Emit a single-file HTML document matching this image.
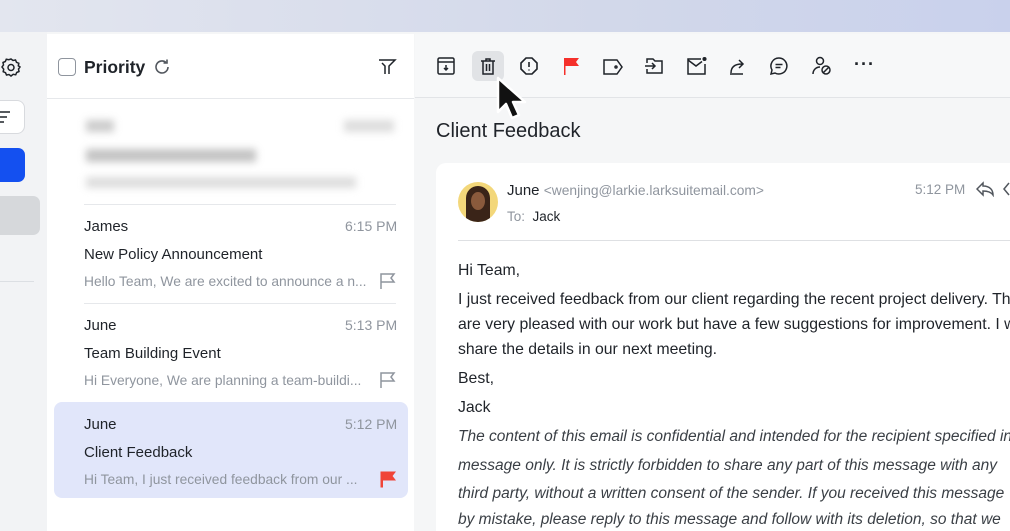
<!DOCTYPE html>
<html><head><meta charset="utf-8"><style>
*{margin:0;padding:0;box-sizing:border-box}
html,body{width:1010px;height:531px;overflow:hidden}
body{position:relative;font-family:"Liberation Sans",Arial,sans-serif;color:#1f2329;background:#f5f6f7}
.a{position:absolute;white-space:nowrap}
.top{left:0;top:0;width:1010px;height:32px;background:linear-gradient(90deg,#e3e6ef,#d2d8ea 60%,#c9d1ec)}
.side{left:0;top:32px;width:47px;height:499px;background:#f2f3f5}
.list{left:47px;top:34px;width:367px;height:497px;background:#fff}
.right{left:415px;top:34px;width:595px;height:497px;background:#f5f6f7}
.tb{left:415px;top:34px;width:595px;height:64px;background:#f7f8f9;border-bottom:1px solid #e2e4e7}
.card{left:436px;top:163px;width:600px;height:368px;background:#fff;border-radius:10px 10px 0 0}
.name{font-size:15px;color:#1f2329}
.time{font-size:14px;color:#8f959e}
.subj{font-size:15px;color:#1f2329}
.prev{font-size:13.8px;color:#8f959e}
.sep{height:1px;background:#e6e8eb}
.body{font-size:15.8px;color:#1f2329;left:458px}
.it{font-style:italic;color:#3a3f45;font-size:15.5px}
svg{position:absolute}
</style></head><body>
<div class="a top"></div>
<div class="a side"></div>
<div class="a list"></div>
<div class="a right"></div>
<div class="a tb"></div>

<svg style="left:1px;top:57px" width="20" height="20" viewBox="0 0 20 20" fill="none" stroke="#1f2329" stroke-width="1.5"><path d="M10 2l2 1.5 2.5-.5 1 2.3 2.3 1-.5 2.5L19 10l-1.5 2 .5 2.5-2.3 1-1 2.3-2.5-.5L10 19l-2-1.5-2.5.5-1-2.3-2.3-1 .5-2.5L1 10l1.5-2L2 5.5l2.3-1 1-2.3 2.5.5z"/><circle cx="10" cy="10.5" r="3"/></svg>
<div class="a" style="left:-10px;top:100px;width:35px;height:34px;border:1px solid #d8dade;border-radius:8px;background:#fff"></div>
<svg style="left:0;top:110px" width="12" height="14" stroke="#1f2329" stroke-width="1.5"><path d="M0 2h10M0 7h7M0 12h4"/></svg>
<div class="a" style="left:-10px;top:148px;width:35px;height:34px;background:#1450f0;border-radius:7px"></div>
<div class="a" style="left:-10px;top:196px;width:50px;height:39px;background:#d6d8db;border-radius:7px"></div>
<div class="a" style="left:0;top:281px;width:34px;height:1px;background:#dcdfe3"></div>

<div class="a" style="left:58px;top:58px;width:18px;height:18px;border:1.5px solid #8f959e;border-radius:4px"></div>
<div class="a" style="left:84px;top:57px;font-size:17.5px;font-weight:600;color:#1f2329">Priority</div>
<svg style="left:152px;top:57px" width="20" height="20" viewBox="0 0 20 20" fill="none" stroke="#51565d" stroke-width="1.6"><path d="M16 10a6 6 0 1 1-2-4.5"/><path d="M15 2.5V6h-3.5"/></svg>
<svg style="left:377px;top:57px" width="20" height="20" viewBox="0 0 20 20" fill="none" stroke="#1f2329" stroke-width="1.5"><path d="M2 3h16l-6 6v8M8 17V9L5 6"/></svg>
<div class="a sep" style="left:47px;top:98px;width:367px"></div>

<div class="a" style="left:84px;top:112px;width:312px;height:80px;filter:blur(4px);opacity:.5">
<div class="a" style="left:2px;top:8px;width:28px;height:12px;background:#999"></div>
<div class="a" style="left:260px;top:8px;width:50px;height:12px;background:#bbb"></div>
<div class="a" style="left:2px;top:37px;width:170px;height:13px;background:#888"></div>
<div class="a" style="left:2px;top:65px;width:270px;height:11px;background:#bbb"></div>
</div>
<div class="a sep" style="left:84px;top:204px;width:312px"></div>

<div class="a name" style="left:84px;top:218px">James</div>
<div class="a time" style="left:345px;top:218px">6:15 PM</div>
<div class="a subj" style="left:84px;top:246px">New Policy Announcement</div>
<div class="a prev" style="left:84px;top:274px">Hello Team, We are excited to announce a n...</div>
<svg style="left:379px;top:272px" width="18" height="18" fill="none" stroke="#8f959e" stroke-width="1.5"><path d="M2 17V2h13l-3 4 3 4H2"/></svg>
<div class="a sep" style="left:84px;top:303px;width:312px"></div>

<div class="a name" style="left:84px;top:317px">June</div>
<div class="a time" style="left:345px;top:317px">5:13 PM</div>
<div class="a subj" style="left:84px;top:345px">Team Building Event</div>
<div class="a prev" style="left:84px;top:373px">Hi Everyone, We are planning a team-buildi...</div>
<svg style="left:379px;top:371px" width="18" height="18" fill="none" stroke="#8f959e" stroke-width="1.5"><path d="M2 17V2h13l-3 4 3 4H2"/></svg>

<div class="a" style="left:54px;top:402px;width:354px;height:96px;background:#e1e6fa;border-radius:8px"></div>
<div class="a name" style="left:84px;top:416px">June</div>
<div class="a time" style="left:345px;top:416px">5:12 PM</div>
<div class="a subj" style="left:84px;top:444px">Client Feedback</div>
<div class="a prev" style="left:84px;top:472px">Hi Team, I just received feedback from our ...</div>
<svg style="left:379px;top:470px" width="18" height="18"><path d="M2 17V2h14l-3 4 3 4H3.5v7z" fill="#f04438" stroke="#f04438" stroke-width="1"/></svg>

<svg style="left:436px;top:56px" width="21" height="21" fill="none" stroke="#1f2329" stroke-width="1.5"><rect x="2" y="2" width="16" height="16" rx="1.5"/><path d="M2 6h16M10 9v5M8 12l2 2 2-2"/></svg>
<div class="a" style="left:472px;top:51px;width:32px;height:30px;background:#e1e3e6;border-radius:6px"></div>
<svg style="left:478px;top:56px" width="21" height="21" fill="none" stroke="#1f2329" stroke-width="1.5"><path d="M3 5h14M8 5V3h4v2M5 5v13h10V5M8.5 8v7M11.5 8v7"/></svg>
<svg style="left:519px;top:56px" width="21" height="21" fill="none" stroke="#1f2329" stroke-width="1.6"><path d="M7 2h6l5 5v6l-5 5H7l-5-5V7z"/><path d="M10 6v5M10 13.5v1"/></svg>
<svg style="left:561px;top:56px" width="21" height="21"><path d="M3 19V2h15l-3 4 3 4H4.5v9z" fill="#f5302b"/></svg>
<svg style="left:602px;top:57px" width="22" height="20" fill="none" stroke="#1f2329" stroke-width="1.5"><path d="M2 3h13l5 7-5 7H2z"/><circle cx="14" cy="10" r="1"/></svg>
<svg style="left:644px;top:56px" width="21" height="21" fill="none" stroke="#1f2329" stroke-width="1.5"><path d="M3 7V3h6l2 2h7v12H3v-4"/><path d="M1 10h10M8 7l3 3-3 3"/></svg>
<svg style="left:686px;top:56px" width="22" height="21" fill="none" stroke="#1f2329" stroke-width="1.5"><path d="M15 3H2v15h17V8"/><path d="M2 4l8 6 6-4.5"/><circle cx="18.5" cy="3" r="1.3" fill="#1f2329"/></svg>
<svg style="left:728px;top:56px" width="21" height="21" fill="none" stroke="#1f2329" stroke-width="1.5"><path d="M3 17c0-6 4-9 11-9M11 4l4 4-4 4M2 18h13"/></svg>
<svg style="left:769px;top:56px" width="21" height="21" fill="none" stroke="#1f2329" stroke-width="1.5"><path d="M10 2a8 8 0 1 1-4 15l-4 1 1-4A8 8 0 0 1 10 2z"/><path d="M6.5 8.5h7M6.5 11.5h5"/></svg>
<svg style="left:811px;top:55px" width="22" height="22" fill="none" stroke="#1f2329" stroke-width="1.5"><circle cx="9" cy="6" r="3.5"/><path d="M2 19c0-4 3-7 7-7"/><circle cx="15" cy="15" r="4"/><path d="M12.5 17.5l5-5"/></svg>
<div class="a" style="left:854px;top:54px;font-size:18px;letter-spacing:1px;font-weight:bold">···</div>
<svg style="left:495px;top:76px" width="36" height="48" viewBox="0 0 36 48"><path d="M3 2v34l8-8 6 14 7-3-6-13h12z" fill="#111" stroke="#fff" stroke-width="2.5" stroke-linejoin="round"/></svg>

<div class="a" style="left:436px;top:120px;font-size:20px;color:#1f2329">Client Feedback</div>

<div class="a card"></div>
<div class="a" style="left:458px;top:182px;width:40px;height:40px;border-radius:50%;background:#f3d77a;overflow:hidden">
<div class="a" style="left:8px;top:4px;width:24px;height:40px;border-radius:12px 12px 4px 4px;background:#3a2418"></div>
<div class="a" style="left:13px;top:10px;width:14px;height:18px;border-radius:50%;background:#8a5a3c"></div>
</div>
<div class="a" style="left:507px;top:182px;font-size:15px">June <span style="font-size:13.8px;color:#8f959e">&lt;wenjing@larkie.larksuitemail.com&gt;</span></div>
<div class="a" style="left:507px;top:209px;font-size:13.5px;color:#8f959e">To:&nbsp; <span style="color:#1f2329">Jack</span></div>
<div class="a time" style="left:915px;top:182px;font-size:13.5px">5:12 PM</div>
<svg style="left:976px;top:181px" width="18" height="16" fill="none" stroke="#51565d" stroke-width="1.5"><path d="M7 2L1 8l6 6V10c5 0 8 1 10 4 0-5-3-9-10-9z"/></svg>
<svg style="left:1003px;top:181px" width="10" height="16" fill="none" stroke="#51565d" stroke-width="1.5"><path d="M6 2L1 8l5 6"/></svg>
<div class="a sep" style="left:458px;top:240px;width:560px;background:#dee0e3"></div>

<div class="a body" style="top:262px">Hi Team,</div>
<div class="a body" style="top:291px">I just received feedback from our client regarding the recent project delivery. They</div>
<div class="a body" style="top:316px">are very pleased with our work but have a few suggestions for improvement. I will</div>
<div class="a body" style="top:341px">share the details in our next meeting.</div>
<div class="a body" style="top:370px">Best,</div>
<div class="a body" style="top:399px">Jack</div>
<div class="a body it" style="top:428px">The content of this email is confidential and intended for the recipient specified in</div>
<div class="a body it" style="top:457px">message only. It is strictly forbidden to share any part of this message with any</div>
<div class="a body it" style="top:485px">third party, without a written consent of the sender. If you received this message</div>
<div class="a body it" style="top:511px">by mistake, please reply to this message and follow with its deletion, so that we</div>
</body></html>
